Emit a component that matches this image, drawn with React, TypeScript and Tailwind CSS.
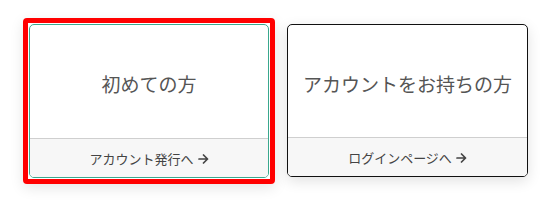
import React from "react";

function Arrow() {
  return (
    <svg width="11" height="10" viewBox="0 0 11 10" className="ml-[4px]" fill="none">
      <path d="M1 5h8.5M5.5 1l4 4-4 4" stroke="#444" strokeWidth="1.7" strokeLinecap="round" strokeLinejoin="round" />
    </svg>
  );
}

function CardBody({ title, link }: { title: string; link: string }) {
  return (
    <>
      <div className="flex flex-1 items-center justify-center pt-[6px] text-[19px] text-[#555]">{title}</div>
      <div className="flex h-[39px] items-center justify-center border-t border-[#cfcfcf] bg-[#f7f7f7] pt-[1px] text-[13px] text-[#444]">
        {link}
        <Arrow />
      </div>
    </>
  );
}

export default function App() {
  return (
    <div
      className="flex h-[201px] w-[558px] items-start gap-[12px] bg-white pl-[23px] pt-[18px]"
      style={{ fontFamily: '"Noto Sans CJK JP", "Noto Sans", sans-serif' }}
    >
      <div className="rounded-[4px] border-[5px] border-solid border-[#ff0000] bg-white p-[1px] shadow-[0_4px_14px_rgba(0,0,0,0.1)]">
        <div className="overflow-hidden rounded-[5px] border border-solid border-[#3aa88e] bg-white">
          <a href="#" className="flex h-[152px] w-[238px] flex-col">
            <CardBody title="初めての方" link="アカウント発行へ" />
          </a>
        </div>
      </div>
      <div className="mt-[6px] overflow-hidden rounded-[5px] border border-solid border-[#111] bg-white shadow-[0_4px_14px_rgba(0,0,0,0.12)]">
        <a href="#" className="flex h-[151px] w-[239px] flex-col">
          <CardBody title="アカウントをお持ちの方" link="ログインページへ" />
        </a>
      </div>
    </div>
  );
}
